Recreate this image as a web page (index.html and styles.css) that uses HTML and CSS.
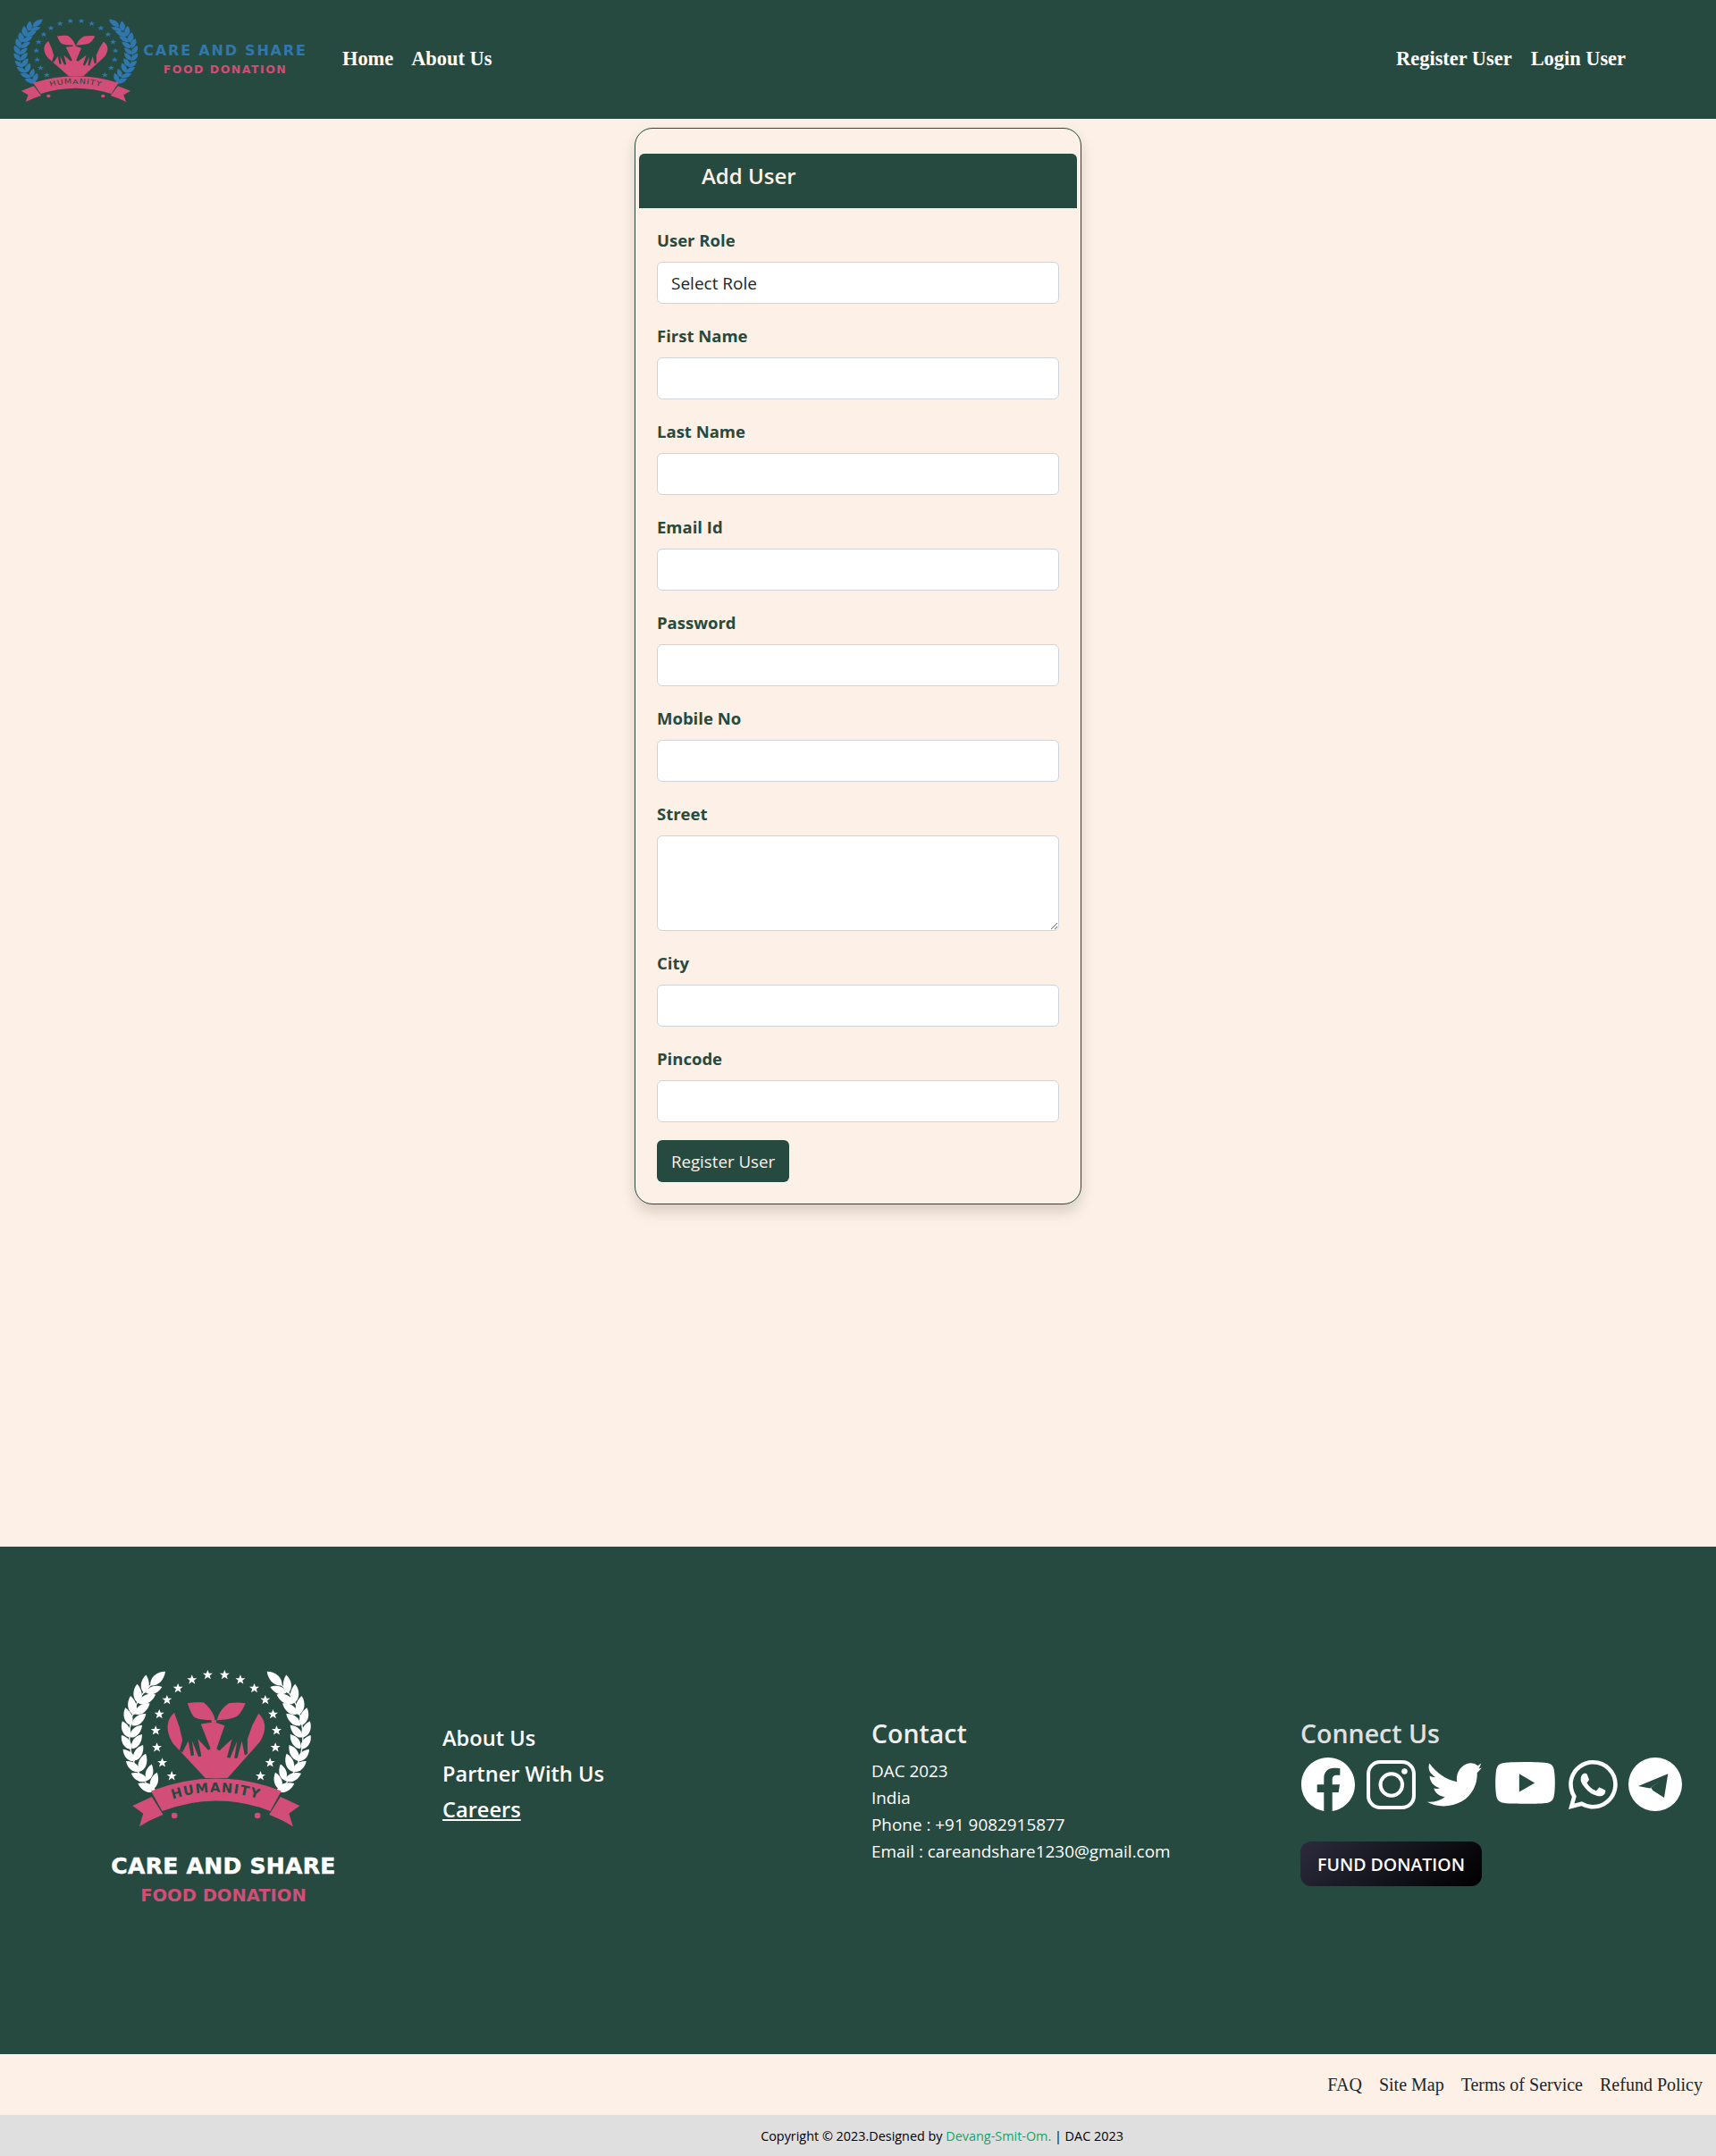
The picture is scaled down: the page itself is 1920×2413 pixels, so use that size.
FILE: index.html
```html
<!DOCTYPE html>
<html lang="en">
<head>
    <meta charset="UTF-8">
    <title>Care and Share - Add User</title>
    <link rel="stylesheet" href="styles.css">
</head>
<body>
<svg class="defs" width="0" height="0" aria-hidden="true">
    <defs>
        <path id="leaf" d="M0 0C.22 -.3 .68 -.3 1 0C.68 .26 .22 .3 0 0Z"/>
        <polygon id="star" points="0,-17 4.5,-5.5 16.5,-5.5 7,2 10.5,14 0,7 -10.5,14 -7,2 -16.5,-5.5 -4.5,-5.5"/>
        <path id="ribbon-curve" d="M240 530Q421 458 602 530"/>
        <g id="laurel">
            <path class="stem" d="M212 490C150 440 125 360 130 290C135 220 165 165 205 130"/>
            <use href="#leaf" transform="translate(200 135) rotate(-43) scale(69)"/>
            <use href="#leaf" transform="translate(180 162) rotate(-85) scale(63)"/>
            <use href="#leaf" transform="translate(185 160) rotate(-20) scale(58)"/>
            <use href="#leaf" transform="translate(160 195) rotate(-94) scale(65)"/>
            <use href="#leaf" transform="translate(160 195) rotate(-27) scale(65)"/>
            <use href="#leaf" transform="translate(145 235) rotate(-100) scale(66)"/>
            <use href="#leaf" transform="translate(148 232) rotate(-36) scale(62)"/>
            <use href="#leaf" transform="translate(135 270) rotate(-108) scale(63)"/>
            <use href="#leaf" transform="translate(138 270) rotate(-40) scale(62)"/>
            <use href="#leaf" transform="translate(130 310) rotate(-114) scale(60)"/>
            <use href="#leaf" transform="translate(132 310) rotate(-46) scale(58)"/>
            <use href="#leaf" transform="translate(135 350) rotate(-124) scale(57)"/>
            <use href="#leaf" transform="translate(138 348) rotate(-55) scale(59)"/>
            <use href="#leaf" transform="translate(148 390) rotate(-135) scale(57)"/>
            <use href="#leaf" transform="translate(145 388) rotate(-60) scale(61)"/>
            <use href="#leaf" transform="translate(165 425) rotate(-143) scale(59)"/>
            <use href="#leaf" transform="translate(165 425) rotate(-72) scale(63)"/>
            <use href="#leaf" transform="translate(190 455) rotate(-156) scale(60)"/>
            <use href="#leaf" transform="translate(190 455) rotate(-75) scale(57)"/>
            <use href="#leaf" transform="translate(218 490) rotate(-157) scale(65)"/>
            <use href="#leaf" transform="translate(205 485) rotate(-73) scale(60)"/>
        </g>
        <g id="stars">
            <use href="#star" x="393" y="100"/>
            <use href="#star" x="340" y="116"/>
            <use href="#star" x="293" y="145"/>
            <use href="#star" x="256" y="184"/>
            <use href="#star" x="230" y="232"/>
            <use href="#star" x="218" y="287"/>
            <use href="#star" x="222" y="344"/>
            <use href="#star" x="240" y="395"/>
            <use href="#star" x="272" y="440"/>
        </g>
        <path id="tail" d="M205 510L140 540L176 566L163 610Q200 586 243 570Z"/>
        <symbol id="emblem" viewBox="100 80 644 535" preserveAspectRatio="none">
            <g class="wreath">
                <use href="#laurel"/>
                <use href="#stars"/>
                <use href="#laurel" transform="translate(843 0) scale(-1 1)"/>
                <use href="#stars" transform="translate(843 0) scale(-1 1)"/>
            </g>
            <path class="pink" d="M280 227C265 240 258 258 258 275C258 295 268 320 280 335L385 447L460 447L560 335C575 318 585 295 585 275C585 258 578 242 565 230Z"/>
            <path class="cut" d="M280 225L298 275L308 320L298 355L308 360L328 322L337 372L347 370L340 320L362 375L372 373L360 315L395 353L403 348L370 265L415 258L450 270L423 348L432 355L475 315L458 377L468 380L492 323L483 380L493 380L508 323L518 370L527 365L527 315L543 270L565 228Z"/>
            <path class="pink" d="M325 195C345 191 362 191 380 193C395 205 408 222 415 240L420 262L408 262L405 252C385 252 365 250 350 243C340 236 332 215 325 195Z"/>
            <path class="pink" d="M520 195C500 191 482 192 465 195C448 205 436 220 430 235L420 262L415 252C445 252 470 248 490 240C500 235 512 215 520 195Z"/>
            <use class="pink" href="#tail"/>
            <use class="pink" href="#tail" transform="translate(843 0) scale(-1 1)"/>
            <path class="pink" d="M202 490Q421 406 641 490L604 558Q421 488 240 558Z"/>
            <circle class="pink" cx="281" cy="573" r="10"/>
            <circle class="pink" cx="561" cy="573" r="10"/>
            <text class="ribbon-text"><textPath href="#ribbon-curve" startOffset="50%" text-anchor="middle">HUMANITY</textPath></text>
        </symbol>
    </defs>
</svg>

<nav class="navbar">
    <a class="brand" href="#">
        <svg class="brand-emblem"><use href="#emblem"/></svg>
        <span class="brand-text">
            <span class="brand-name">CARE AND SHARE</span>
            <span class="brand-sub">FOOD DONATION</span>
        </span>
    </a>
    <ul class="nav-list">
        <li><a href="#">Home</a></li>
        <li><a href="#">About Us</a></li>
    </ul>
    <ul class="nav-list nav-right">
        <li><a href="#">Register User</a></li>
        <li><a href="#">Login User</a></li>
    </ul>
</nav>

<main class="content">
    <div class="card">
        <div class="card-head"><h4>Add User</h4></div>
        <form class="card-body">
            <label for="role">User Role</label>
            <select id="role"><option>Select Role</option></select>
            <label for="first">First Name</label>
            <input id="first" type="text">
            <label for="last">Last Name</label>
            <input id="last" type="text">
            <label for="email">Email Id</label>
            <input id="email" type="email">
            <label for="pass">Password</label>
            <input id="pass" type="password">
            <label for="mobile">Mobile No</label>
            <input id="mobile" type="text">
            <label for="street">Street</label>
            <textarea id="street"></textarea>
            <label for="city">City</label>
            <input id="city" type="text">
            <label for="pin">Pincode</label>
            <input id="pin" type="text">
            <button type="button" class="btn-register">Register User</button>
        </form>
    </div>
</main>

<footer class="footer">
    <div class="foot-col foot-logo">
        <svg class="foot-emblem"><use href="#emblem"/></svg>
        <div class="foot-name">CARE AND SHARE</div>
        <div class="foot-sub">FOOD DONATION</div>
    </div>
    <ul class="foot-col foot-links">
        <li><a href="#">About Us</a></li>
        <li><a href="#">Partner With Us</a></li>
        <li><a href="#" class="under">Careers</a></li>
    </ul>
    <div class="foot-col foot-contact">
        <h3>Contact</h3>
        <p>DAC 2023</p>
        <p>India</p>
        <p>Phone : +91 9082915877</p>
        <p>Email : careandshare1230@gmail.com</p>
    </div>
    <div class="foot-col foot-connect">
        <h3>Connect Us</h3>
        <div class="socials">
            <svg class="ic-fb" viewBox="0 0 16 16"><path d="M16 8.049c0-4.446-3.582-8.05-8-8.05C3.58 0-.002 3.603-.002 8.05c0 4.017 2.926 7.347 6.75 7.951v-5.625h-2.03V8.05H6.75V6.275c0-2.017 1.195-3.131 3.022-3.131.876 0 1.791.157 1.791.157v1.98h-1.009c-.993 0-1.303.621-1.303 1.258v1.51h2.218l-.354 2.326H9.25V16c3.824-.604 6.75-3.934 6.75-7.951"/></svg>
            <svg class="ic-ig" viewBox="0 0 54 54">
                <rect class="ig-line" x="2" y="2" width="50" height="50" rx="13"/>
                <circle class="ig-line" cx="27.300" cy="27" r="12"/>
                <circle cx="41.700" cy="12.300" r="3.200"/>
            </svg>
            <svg class="ic-tw" viewBox="215 35 190 155"><path d="M225 42C250 75 280 97 318 104C314 80 325 55 350 44C365 38 380 42 388 50L400 42L392 60L402 57L386 74C388 110 370 150 335 170C300 190 250 192 218 172C240 174 262 168 278 155C258 153 245 142 240 126C246 128 254 128 260 125C240 120 226 104 226 84C232 87 238 89 246 89C228 78 218 62 225 42Z"/></svg>
            <svg class="ic-yt" viewBox="0 2 16 12"><path d="M8.051 1.999h.089c.822.003 4.987.033 6.11.335a2.01 2.01 0 0 1 1.415 1.42c.101.38.172.883.22 1.402l.01.104.022.26.008.104c.065.914.073 1.77.074 1.957v.075c-.001.194-.01 1.108-.082 2.06l-.008.105-.009.104c-.05.572-.124 1.14-.235 1.558a2.01 2.01 0 0 1-1.415 1.42c-1.16.312-5.569.334-6.18.335h-.142c-.309 0-1.587-.006-2.927-.052l-.17-.006-.087-.004-.171-.007-.171-.007c-1.11-.049-2.167-.128-2.654-.26a2.01 2.01 0 0 1-1.415-1.419c-.111-.417-.185-.986-.235-1.558L.09 9.82l-.008-.104A31 31 0 0 1 0 7.68v-.123c.002-.215.01-.958.064-1.778l.007-.103.003-.052.008-.104.022-.26.01-.104c.048-.519.119-1.023.22-1.402a2.01 2.01 0 0 1 1.415-1.42c.487-.13 1.544-.21 2.654-.26l.17-.007.172-.006.086-.003.171-.007A100 100 0 0 1 7.858 2zM6.4 5.209v4.818l4.157-2.408z"/></svg>
            <svg class="ic-wa" viewBox="0 0 16 16"><path d="M13.601 2.326A7.85 7.85 0 0 0 7.994 0C3.627 0 .068 3.558.064 7.926c0 1.399.366 2.76 1.057 3.965L0 16l4.204-1.102a7.9 7.9 0 0 0 3.79.965h.004c4.368 0 7.926-3.558 7.93-7.93A7.9 7.9 0 0 0 13.6 2.326zM7.994 14.521a6.6 6.6 0 0 1-3.356-.92l-.24-.144-2.494.654.666-2.433-.156-.251a6.56 6.56 0 0 1-1.007-3.505c0-3.626 2.957-6.584 6.591-6.584a6.56 6.56 0 0 1 4.66 1.931 6.56 6.56 0 0 1 1.928 4.66c-.004 3.639-2.961 6.592-6.592 6.592m3.615-4.934c-.197-.099-1.17-.578-1.353-.646-.182-.065-.315-.099-.445.099-.133.197-.513.646-.627.775-.114.133-.232.148-.43.05-.197-.1-.836-.308-1.592-.985-.59-.525-.985-1.175-1.103-1.372-.114-.198-.011-.304.088-.403.087-.088.197-.232.296-.346.1-.114.133-.198.198-.33.065-.134.034-.248-.015-.347-.05-.099-.445-1.076-.612-1.47-.16-.389-.323-.335-.445-.34-.114-.007-.247-.007-.38-.007a.73.73 0 0 0-.529.247c-.182.198-.691.677-.691 1.654s.71 1.916.81 2.049c.098.133 1.394 2.132 3.383 2.992.47.205.84.326 1.129.418.475.152.904.129 1.246.08.38-.058 1.171-.48 1.338-.943.164-.464.164-.86.114-.943-.049-.084-.182-.133-.38-.232"/></svg>
            <svg class="ic-tg" viewBox="0 0 60 60"><path fill-rule="evenodd" d="M30 0a30 30 0 1 0 0 60a30 30 0 0 0 0-60zM44.300 18.300L40 45L27.500 37L25 33.500L36 26L24 34.500L11 32z"/></svg>
        </div>
        <button type="button" class="btn-fund">FUND DONATION</button>
    </div>
</footer>

<div class="sub-links">
    <a href="#">FAQ</a>
    <a href="#">Site Map</a>
    <a href="#">Terms of Service</a>
    <a href="#">Refund Policy</a>
</div>

<div class="copyright">Copyright © 2023.Designed by <a href="#">Devang-Smit-Om.</a> | DAC 2023</div>
</body>
</html>
```

FILE: styles.css
```css
* { margin: 0; padding: 0; box-sizing: border-box; }
body { background: #fdf0e6; font-family: "Open Sans", "Noto Sans", sans-serif; font-size: 16px; color: #212529; }
a { color: inherit; text-decoration: none; }
ul { list-style: none; }
.defs { position: absolute; }

/* logo */
.stem { fill: none; stroke: currentColor; stroke-width: 4; }
.wreath { fill: currentColor; }
.pink { fill: #d24d78; }
.cut { fill: #264a40; }
.ribbon-text { font-family: "DejaVu Sans", sans-serif; font-size: 44px; letter-spacing: 4px; fill: #264a40; }

/* navbar */
.navbar { height: 133px; background: #264a40; display: flex; align-items: center; padding-left: 15px; }
.brand { display: flex; align-items: center; }
.brand-emblem { width: 140px; height: 95px; color: #2f77ad; margin-top: 2px; }
.brand-text { display: flex; flex-direction: column; align-items: center; margin-left: 2px; margin-top: 2px; font-family: "DejaVu Sans", sans-serif; font-weight: 700; width: 190px; }
.brand-name { color: #2f77ad; font-size: 16px; letter-spacing: 1.800px; line-height: 20px; }
.brand-sub { color: #d24d78; font-size: 12.500px; letter-spacing: 1.500px; line-height: 21px; }
.nav-list { display: flex; gap: 20px; margin-left: 36px; margin-bottom: 2px; font-family: "Liberation Serif", serif; font-weight: 700; font-size: 22.400px; color: #fff; }
.nav-right { margin-left: auto; padding-right: 101px; gap: 21px; }

/* form */
.content { height: 1598px; padding-top: 10px; }
.card { width: 500px; margin: 0 auto; padding: 28px 4px 0; border: 1px solid #264a40; border-radius: 20px; box-shadow: 0 8px 16px rgba(0,0,0,.15); background: #fdf0e6; }
.card-head { height: 61px; background: #264a40; color: #fdf0e6; border-radius: 6px 6px 0 0; padding: 10px 70px; }
.card-head h4 { font-size: 24px; font-weight: 600; line-height: 30px; }
.card-body { padding: 24px 20px 24px; display: flex; flex-direction: column; align-items: flex-start; }
.card-body label { font-weight: 700; color: #264a40; line-height: 24px; margin-bottom: 12px; font-size: 18.500px; }
.card-body input, .card-body select, .card-body textarea { width: 450px; height: 47px; margin-bottom: 24px; background: #fff; border: 1px solid #ced4da; border-radius: 6px; padding: 6px 15px; font: inherit; font-size: 19px; color: #212529; appearance: none; display: block; }
.card-body textarea { height: 107px; }
.card-body input:last-of-type { margin-bottom: 20px; }
.btn-register { width: 148px; height: 47px; background: #264a40; color: #fdf0e6; border: 0; border-radius: 6px; font: inherit; font-size: 18.700px; }

/* footer */
.footer { height: 568px; background: #264a40; color: #fff; display: grid; grid-template-columns: repeat(4, 480px); }
.foot-col { padding: 0 15px; }
.foot-logo { padding: 137px 0 0; width: 500px; display: flex; flex-direction: column; align-items: center; font-family: "DejaVu Sans", sans-serif; font-weight: 700; }
.foot-emblem { width: 214px; height: 178px; color: #fff; margin-right: 16px; }
.foot-name { font-size: 25px; letter-spacing: .300px; line-height: 30px; margin-top: 28px; -webkit-text-stroke: .5px #fff; }
.foot-sub { font-size: 19.500px; line-height: 28px; margin-top: 4px; color: #d24d78; }
.foot-links { padding-top: 194px; font-size: 23.600px; font-weight: 600; line-height: 40px; }
.under { text-decoration: underline; }
.foot-contact { padding-top: 186px; font-size: 18.900px; line-height: 30px; }
.foot-contact h3, .foot-connect h3 { font-size: 28.500px; font-weight: 600; line-height: 46px; }
.foot-contact h3 { color: #eee; margin-bottom: 4px; }
.foot-connect { padding-top: 186px; }
.foot-connect h3 { color: #e0e0e0; }
.socials { display: flex; align-items: center; height: 60px; margin-top: 4px; }
.socials svg { fill: #fff; flex: none; }
.ic-fb { width: 60px; height: 60px; margin-left: 1px; }
.ic-ig { width: 55px; height: 55px; margin-left: 13px; }
.ig-line { fill: none; stroke: #fff; stroke-width: 4; }
.ic-tw { width: 63px; height: 52px; margin-left: 12px; }
.ic-yt { width: 67px; height: 50px; margin-left: 14px; }
.ic-wa { width: 55px; height: 55px; margin-left: 15px; }
.ic-tg { width: 60px; height: 60px; margin-left: 12px; }
.btn-fund { display: block; width: 203px; height: 50px; margin-top: 34px; border: 0; border-radius: 12px; background: linear-gradient(135deg, #2b2b3d, #000); color: #fff; font: inherit; font-size: 19.500px; font-weight: 600; }

/* bottom */
.sub-links { height: 68px; display: flex; justify-content: flex-end; align-items: center; gap: 19px; padding-right: 15px; font-family: "Liberation Serif", serif; font-size: 20px; color: #212529; }
.copyright { height: 46px; background: #dfdfdf; text-align: center; padding: 13px 0 0 188px; font-size: 14.400px; line-height: 21px; color: #000; }
.copyright a { color: #0ca86b; }
```
